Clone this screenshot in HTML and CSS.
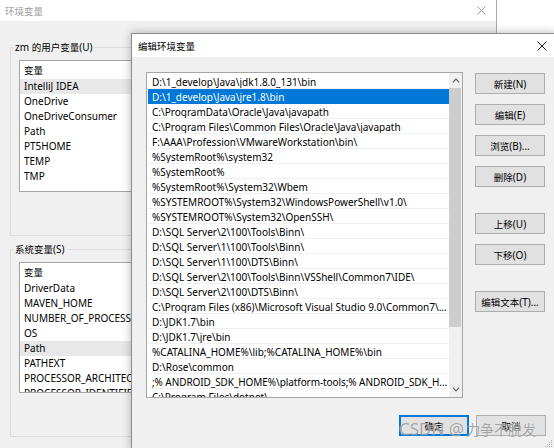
FILE: index.html
```html
<!DOCTYPE html>
<html lang="zh-CN">
<head>
<meta charset="utf-8">
<title>编辑环境变量</title>
<link rel="stylesheet" href="styles.css">
</head>
<body>
<div class="win back">
  <div class="titlebar">
    <span class="title"><span class="zh">环境变量</span></span>
    <svg class="close" width="9" height="9" viewBox="0 0 9 9"><path d="M0.5 0.5L8.5 8.5M8.5 0.5L0.5 8.5" stroke="#9a9a9a" stroke-width="1" fill="none"/></svg>
  </div>
  <div class="back-body">
    <fieldset class="group">
      <legend>zm <span class="zh">的用户变量</span>(U)</legend>
      <div class="list user">
        <div class="head"><span class="zh">变量</span></div>
        <div class="row hl">IntelliJ IDEA</div>
        <div class="row">OneDrive</div>
        <div class="row">OneDriveConsumer</div>
        <div class="row">Path</div>
        <div class="row">PT5HOME</div>
        <div class="row">TEMP</div>
        <div class="row">TMP</div>
      </div>
    </fieldset>
    <fieldset class="group">
      <legend><span class="zh">系统变量</span>(S)</legend>
      <div class="list sys">
        <div class="head"><span class="zh">变量</span></div>
        <div class="row">DriverData</div>
        <div class="row">MAVEN_HOME</div>
        <div class="row">NUMBER_OF_PROCESSORS</div>
        <div class="row">OS</div>
        <div class="row hl">Path</div>
        <div class="row">PATHEXT</div>
        <div class="row">PROCESSOR_ARCHITECTURE</div>
        <div class="row">PROCESSOR_IDENTIFIER</div>
      </div>
    </fieldset>
  </div>
</div>

<div class="win front">
  <div class="titlebar">
    <span class="title"><span class="zh">编辑环境变量</span></span>
    <svg class="close" width="10" height="10" viewBox="0 0 10 10"><path d="M0.5 0.5L9.5 9.5M9.5 0.5L0.5 9.5" stroke="#1a1a1a" stroke-width="1" fill="none"/></svg>
  </div>
  <div class="front-body">
    <div class="main">
      <div class="pathlist">
        <div class="rows">
          <div class="prow">D:\1_develop\Java\jdk1.8.0_131\bin</div>
          <div class="prow sel">D:\1_develop\Java\jre1.8\bin</div>
          <div class="prow">C:\ProgramData\Oracle\Java\javapath</div>
          <div class="prow">C:\Program Files\Common Files\Oracle\Java\javapath</div>
          <div class="prow">F:\AAA\Profession\VMwareWorkstation\bin\</div>
          <div class="prow">%SystemRoot%\system32</div>
          <div class="prow">%SystemRoot%</div>
          <div class="prow">%SystemRoot%\System32\Wbem</div>
          <div class="prow">%SYSTEMROOT%\System32\WindowsPowerShell\v1.0\</div>
          <div class="prow">%SYSTEMROOT%\System32\OpenSSH\</div>
          <div class="prow">D:\SQL Server\2\100\Tools\Binn\</div>
          <div class="prow">D:\SQL Server\1\100\Tools\Binn\</div>
          <div class="prow">D:\SQL Server\1\100\DTS\Binn\</div>
          <div class="prow">D:\SQL Server\2\100\Tools\Binn\VSShell\Common7\IDE\</div>
          <div class="prow">D:\SQL Server\2\100\DTS\Binn\</div>
          <div class="prow">C:\Program Files (x86)\Microsoft Visual Studio 9.0\Common7\I...</div>
          <div class="prow">D:\JDK1.7\bin</div>
          <div class="prow">D:\JDK1.7\jre\bin</div>
          <div class="prow">%CATALINA_HOME%\lib;%CATALINA_HOME%\bin</div>
          <div class="prow">D:\Rose\common</div>
          <div class="prow tight">;% ANDROID_SDK_HOME%\platform-tools;% ANDROID_SDK_H...</div>
          <div class="prow">C:\Program Files\dotnet\</div>
        </div>
        <div class="sb">
          <div class="arrow up"><svg width="8" height="5" viewBox="0 0 8 5"><path d="M0.8 4.3L4 1.1L7.2 4.3" stroke="#606060" stroke-width="1.2" fill="none"/></svg></div>
          <div class="thumb"></div>
          <div class="track"></div>
          <div class="arrow down"><svg width="8" height="5" viewBox="0 0 8 5"><path d="M0.8 0.7L4 3.9L7.2 0.7" stroke="#606060" stroke-width="1.2" fill="none"/></svg></div>
        </div>
      </div>
      <div class="btns">
        <button class="btn"><span class="zh">新建</span>(N)</button>
        <button class="btn"><span class="zh">编辑</span>(E)</button>
        <button class="btn"><span class="zh">浏览</span>(B)...</button>
        <button class="btn"><span class="zh">删除</span>(D)</button>
        <button class="btn sep"><span class="zh">上移</span>(U)</button>
        <button class="btn"><span class="zh">下移</span>(O)</button>
        <button class="btn sep"><span class="zh">编辑文本</span>(T)...</button>
      </div>
    </div>
    <div class="foot">
      <button class="btn default"><span class="zh">确定</span></button>
      <button class="btn"><span class="zh">取消</span></button>
    </div>
  </div>
  <svg class="grip" width="8" height="8" viewBox="0 0 8 8">
    <rect x="6" y="0" width="1" height="1" fill="#b0b0b0"/>
    <rect x="4" y="2" width="1" height="1" fill="#b0b0b0"/>
    <rect x="6" y="2" width="1" height="1" fill="#b0b0b0"/>
    <rect x="2" y="4" width="1" height="1" fill="#b0b0b0"/>
    <rect x="4" y="4" width="1" height="1" fill="#b0b0b0"/>
    <rect x="6" y="4" width="1" height="1" fill="#b0b0b0"/>
    <rect x="0" y="6" width="1" height="1" fill="#b0b0b0"/>
    <rect x="2" y="6" width="1" height="1" fill="#b0b0b0"/>
    <rect x="4" y="6" width="1" height="1" fill="#b0b0b0"/>
    <rect x="6" y="6" width="1" height="1" fill="#b0b0b0"/>
  </svg>
</div>

<div class="watermark">CSDN @<span class="wzh">力争不脱发</span></div>
</body>
</html>
```

FILE: styles.css
```css
* { box-sizing: border-box; }
html, body { margin: 0; padding: 0; }
body {
  width: 554px;
  height: 448px;
  overflow: hidden;
  position: relative;
  background: #ffffff;
  font-family: "Noto Sans", "Noto Sans CJK SC", sans-serif;
  font-size: 10px;
  color: #000;
}
.zh {
  font-family: "Noto Sans CJK SC", sans-serif;
  font-size: 9.5px;
}

/* ---------- back window ---------- */
.back {
  position: absolute;
  left: 0;
  top: 0;
  width: 497px;
  height: 470px;
  background: #f0f0f0;
  border-right: 1px solid #acacac;
}
.titlebar {
  display: flex;
  align-items: center;
  background: #fff;
}
.titlebar .title { flex: 1; white-space: nowrap; }
.back .titlebar { height: 21px; padding-left: 5px; color: #a0a0a0; }
.back .close { margin-right: 10px; }

.back-body { padding: 18px 10px 0 10px; }
.group {
  margin: 0;
  min-width: 0;
  border: 1px solid #dcdcdc;
  padding: 5px 8px 43px 8px;
}
.group + .group { margin-top: 5px; }
.group legend {
  margin-left: -6px;
  padding: 0 2px;
  height: 16px;
  line-height: 16px;
}
.list {
  background: #fff;
  border: 1px solid #a5a5a5;
  overflow: hidden;
}
.list.user { height: 132px; }
.list.sys { height: 131px; }
.list .head {
  height: 18px;
  padding: 1px 0 0 4px;
  line-height: 17px;
}
.list .row {
  height: 15px;
  line-height: 15px;
  padding-left: 4px;
  white-space: nowrap;
}
.list .row.hl { background: #e8e8e8; }

/* ---------- front dialog ---------- */
.front {
  position: absolute;
  left: 131px;
  top: 33px;
  width: 426px;
  height: 418px;
  background: #f0f0f0;
  border: 1px solid #8c8c8c;
  box-shadow: 0 0 9px rgba(0, 0, 0, 0.28);
}
.front .titlebar { height: 23px; padding-left: 6px; color: #000; }
.front .close { margin-right: 9px; }

.front-body { padding: 15px 10px 0 14px; }
.main { display: flex; gap: 12px; }
.pathlist {
  width: 317px;
  height: 326px;
  background: #fff;
  border: 1px solid #a5a5a5;
  display: flex;
}
.rows {
  flex: 1;
  min-width: 0;
  padding: 1px 0 0 1px;
  overflow: hidden;
}
.prow {
  height: 15px;
  padding: 1px 1px 0 4px;
  line-height: 14px;
  border-bottom: 1px solid #f0f0f0;
  white-space: nowrap;
  overflow: hidden;
  text-overflow: ellipsis;
}
.prow.tight { letter-spacing: -0.08px; }
.prow.sel { background: #0078d7; color: #fff; border-bottom-color: #0078d7; }

.sb {
  width: 13px;
  display: flex;
  flex-direction: column;
  background: #f0f0f0;
}
.sb .arrow {
  display: flex;
  align-items: center;
  justify-content: center;
}
.sb .arrow.up { height: 15px; }
.sb .arrow.down { height: 16px; }
.sb .thumb { height: 239px; background: #cdcdcd; margin-right: 1px; }
.sb .track { flex: 1; }

.btns {
  width: 70px;
  display: flex;
  flex-direction: column;
  gap: 10px;
  padding-top: 1px;
}
.btn {
  height: 21px;
  width: 70px;
  margin: 0;
  padding: 0;
  background: #e1e1e1;
  border: 1px solid #adadad;
  font-family: inherit;
  font-size: 10px;
  color: #000;
  display: flex;
  align-items: center;
  justify-content: center;
  white-space: nowrap;
}
.btn.sep { margin-top: 16px; }
.foot {
  display: flex;
  justify-content: flex-end;
  gap: 7px;
  margin-top: 17px;
}
.btn.default {
  border-color: #0078d7;
  box-shadow: inset 0 0 0 1px #0078d7;
}
.grip {
  position: absolute;
  right: 3px;
  bottom: 2px;
}

/* ---------- watermark ---------- */
.watermark {
  position: absolute;
  left: 399px;
  top: 419px;
  font-size: 17px;
  line-height: 20px;
  color: rgba(105, 105, 105, 0.6);
  text-shadow: 0 0 1px rgba(255, 255, 255, 0.9);
  white-space: nowrap;
  pointer-events: none;
}
.wzh {
  font-family: "Noto Sans CJK SC", sans-serif;
  font-size: 14px;
  margin-left: 2px;
}
```
